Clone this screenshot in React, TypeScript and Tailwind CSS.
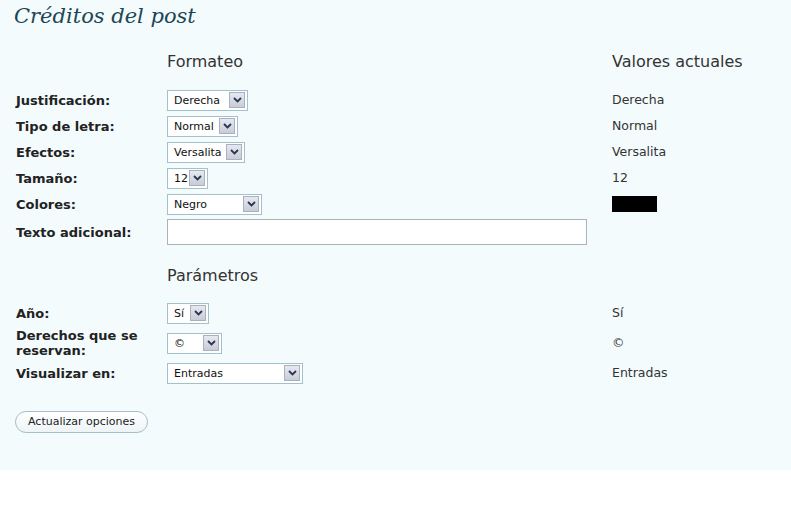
import React from 'react';

const Arrow: React.FC = () => (
  <span className="flex h-[16px] w-[16px] items-center justify-center border border-[#a9b0bf] bg-gradient-to-b from-[#e6e9f0] to-[#c8ccd8]">
    <svg width="9" height="6" viewBox="0 0 9 6">
      <path d="M1 1 L4.5 4.5 L8 1" fill="none" stroke="#2a3550" strokeWidth="1.8" />
    </svg>
  </span>
);

const Select: React.FC<{ value: string; w: string }> = ({ value, w }) => (
  <div className={`flex h-[21px] items-center justify-between border border-[#a3c1ca] bg-white pl-[6px] pr-[2px] ${w}`}>
    <span className="text-[11px] leading-none text-[#111]">{value}</span>
    <Arrow />
  </div>
);

const Row: React.FC<{ label: React.ReactNode; h: string; value?: React.ReactNode; children: React.ReactNode }> = ({ label, h, value, children }) => (
  <div className={`flex items-center ${h}`}>
    <div className="w-[151px] text-[13px] font-bold leading-[15px] text-[#222]">{label}</div>
    <div className="w-[445px]">{children}</div>
    <div className="text-[12.5px] text-[#333]">{value}</div>
  </div>
);

const Heading: React.FC<{ left: string; right?: string }> = ({ left, right }) => (
  <div className="flex h-[26px] items-center text-[16px] text-[#333]">
    <div className="w-[151px]" />
    <div className="w-[445px]">{left}</div>
    <div>{right}</div>
  </div>
);

const App: React.FC = () => {
  return (
    <div className="h-[512px] w-[791px] bg-white" style={{ fontFamily: '"DejaVu Sans", Verdana, sans-serif' }}>
      <div className="bg-[#f3fbfd] pb-[37px] pl-[16px]">
        <h1
          className="-ml-[2px] h-[34px] pt-[3px] text-[21px] italic leading-[26px] text-[#1c4655]"
          style={{ fontFamily: '"DejaVu Serif", Georgia, serif' }}
        >
          Créditos del post
        </h1>

        <div className="mt-[15px]">
          <Heading left="Formateo" right="Valores actuales" />
        </div>

        <div className="mt-[12px]">
          <Row label="Justificación:" h="h-[26px]" value="Derecha">
            <Select value="Derecha" w="w-[81px]" />
          </Row>
          <Row label="Tipo de letra:" h="h-[26px]" value="Normal">
            <Select value="Normal" w="w-[71px]" />
          </Row>
          <Row label="Efectos:" h="h-[26px]" value="Versalita">
            <Select value="Versalita" w="w-[78px]" />
          </Row>
          <Row label="Tamaño:" h="h-[26px]" value="12">
            <Select value="12" w="w-[41px]" />
          </Row>
          <Row label="Colores:" h="h-[26px]" value={<div className="h-[16px] w-[45px] bg-black" />}>
            <Select value="Negro" w="w-[95px]" />
          </Row>
          <Row label="Texto adicional:" h="h-[30px]">
            <div className="h-[26px] w-[420px] border border-[#a9b4b8] bg-white" />
          </Row>
        </div>

        <div className="mt-[16px]">
          <Heading left="Parámetros" />
        </div>

        <div className="mt-[11px]">
          <Row label="Año:" h="h-[26px]" value="Sí">
            <Select value="Sí" w="w-[42px]" />
          </Row>
          <Row label={<>Derechos que se<br />reservan:</>} h="h-[34px]" value="©">
            <Select value="©" w="w-[55px]" />
          </Row>
          <Row label="Visualizar en:" h="h-[26px]" value="Entradas">
            <Select value="Entradas" w="w-[136px]" />
          </Row>
        </div>

        <div className="mt-[22px]">
          <button className="-ml-[1px] h-[22px] rounded-full border border-[#a3c0c9] bg-gradient-to-b from-white to-[#eef4f6] px-[12px] text-[11px] leading-none text-[#222]">
            Actualizar opciones
          </button>
        </div>
      </div>
    </div>
  );
};

export default App;
